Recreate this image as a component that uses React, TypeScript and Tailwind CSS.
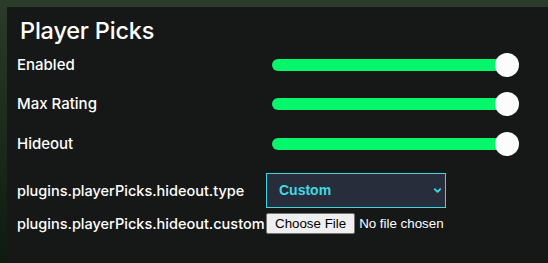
import { ChevronDown } from 'lucide-react';

function SliderRow({ label }: { label: string }) {
  return (
    <div className="flex items-center h-[39.5px]">
      <div className="w-[255px] shrink-0 text-[15px] font-medium text-white">{label}</div>
      <div className="relative w-[247px] h-[24px] flex items-center">
        <div className="h-[12px] w-[236px] rounded-full bg-[#05f56b]" />
        <div className="absolute right-0 top-0 h-[24px] w-[24px] rounded-full bg-[#fcfcfd]" />
      </div>
    </div>
  );
}

export default function App() {
  return (
    <div className="w-[548px] h-[263px] bg-gradient-to-b from-[#2b3c2a] to-[#0f1a10] overflow-hidden">
      <div className="ml-[7px] mt-[7px] h-[256px] bg-[#161818] pl-[10px] pt-[10px] font-['Inter',sans-serif]">
        <h1 className="ml-[3px] text-[23.5px] leading-[28px] font-medium text-white tracking-[-0.2px]">Player Picks</h1>
        <div>
          <SliderRow label="Enabled" />
          <SliderRow label="Max Rating" />
          <SliderRow label="Hideout" />
        </div>
        <div className="mt-[9.5px] flex items-center">
          <div className="w-[249px] shrink-0 text-[14.5px] font-medium text-white whitespace-nowrap">plugins.playerPicks.hideout.type</div>
          <div className="relative w-[180px] h-[35px]">
            <select className="appearance-none w-full h-full bg-[#272d3a] border border-[#3fd6e0] pl-[12px] text-[14px] font-bold text-[#40d9e6] font-['Liberation_Sans',sans-serif] outline-none">
              <option>Custom</option>
            </select>
            <ChevronDown className="absolute right-[3px] top-[12px] w-[11px] h-[11px] text-[#40d9e6] pointer-events-none" strokeWidth={4} />
          </div>
        </div>
        <div className="mt-[5px] flex items-center h-[21px]">
          <div className="w-[249px] shrink-0 text-[14.5px] font-medium text-white whitespace-nowrap">plugins.playerPicks.hideout.custom</div>
          <input
            type="file"
            className="w-[240px] shrink-0 text-[13.33px] text-white font-['Liberation_Sans',sans-serif] file:h-[21px] file:mr-[4px] file:px-[8px] file:bg-[#efefef] file:text-black file:border file:border-[#767676] file:rounded-[2px] file:text-[13.33px]"
          />
        </div>
      </div>
    </div>
  );
}
